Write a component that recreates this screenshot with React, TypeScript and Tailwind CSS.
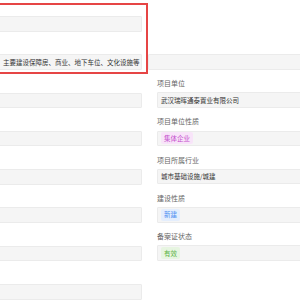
import React from "react";

const font = { fontFamily: '"Noto Sans CJK SC", "Noto Sans", sans-serif' };

function Box({ children, cls = "" }: { children?: React.ReactNode; cls?: string }) {
  return (
    <div className={`h-[15.5px] bg-[#f5f5f5] border border-[#ebebeb] rounded-[1px] flex items-center pl-[3px] text-[6.5px] leading-[9px] text-[#333] whitespace-nowrap overflow-hidden ${cls}`}>
      {children}
    </div>
  );
}

function Tag({ children, cls }: { children: React.ReactNode; cls: string }) {
  return (
    <span className={`h-[12px] px-[3px] rounded-[2px] flex items-center text-[6.5px] leading-[9px] ${cls}`}>
      {children}
    </span>
  );
}

function Field({ label, children }: { label: string; children?: React.ReactNode }) {
  return (
    <div className="flex flex-col">
      <div className="h-[9px] text-[7px] leading-[9px] text-[#666] whitespace-nowrap mb-[4.3px]">{label}</div>
      <Box cls="w-full">{children}</Box>
    </div>
  );
}

export default function App() {
  return (
    <div className="relative w-[300px] h-[300px] bg-white overflow-hidden" style={font}>
      <div className="flex">
        <div className="w-[143px] ml-[-1px] pt-[16px] flex flex-col gap-[22.8px] shrink-0">
          <Box cls="w-full" />
          <Box cls="w-full pl-[2px]">主要建设保障房、商业、地下车位、文化设施等</Box>
          <Box cls="w-full" />
          <Box cls="w-full" />
          <Box cls="w-full" />
          <Box cls="w-full" />
          <Box cls="w-full" />
          <Box cls="w-full" />
        </div>
        <div className="ml-[15px] w-[160px] shrink-0 pt-[54px] flex flex-col gap-[9.5px]">
          <Box cls="ml-[-9px] w-[169px]" />
          <Field label="项目单位">武汉瑞晖通泰置业有限公司</Field>
          <Field label="项目单位性质">
            <Tag cls="bg-[#f8e4f9] text-[#c44fcc]">集体企业</Tag>
          </Field>
          <Field label="项目所属行业">城市基础设施/城建</Field>
          <Field label="建设性质">
            <Tag cls="bg-[#e4eefd] text-[#4b8ef1]">新建</Tag>
          </Field>
          <Field label="备案证状态">
            <Tag cls="bg-[#e7f5e1] text-[#5cb247]">有效</Tag>
          </Field>
        </div>
      </div>
      <div className="absolute left-[-3px] top-[3px] w-[151px] h-[71px] border-2 border-[#e64545] pointer-events-none" />
    </div>
  );
}
